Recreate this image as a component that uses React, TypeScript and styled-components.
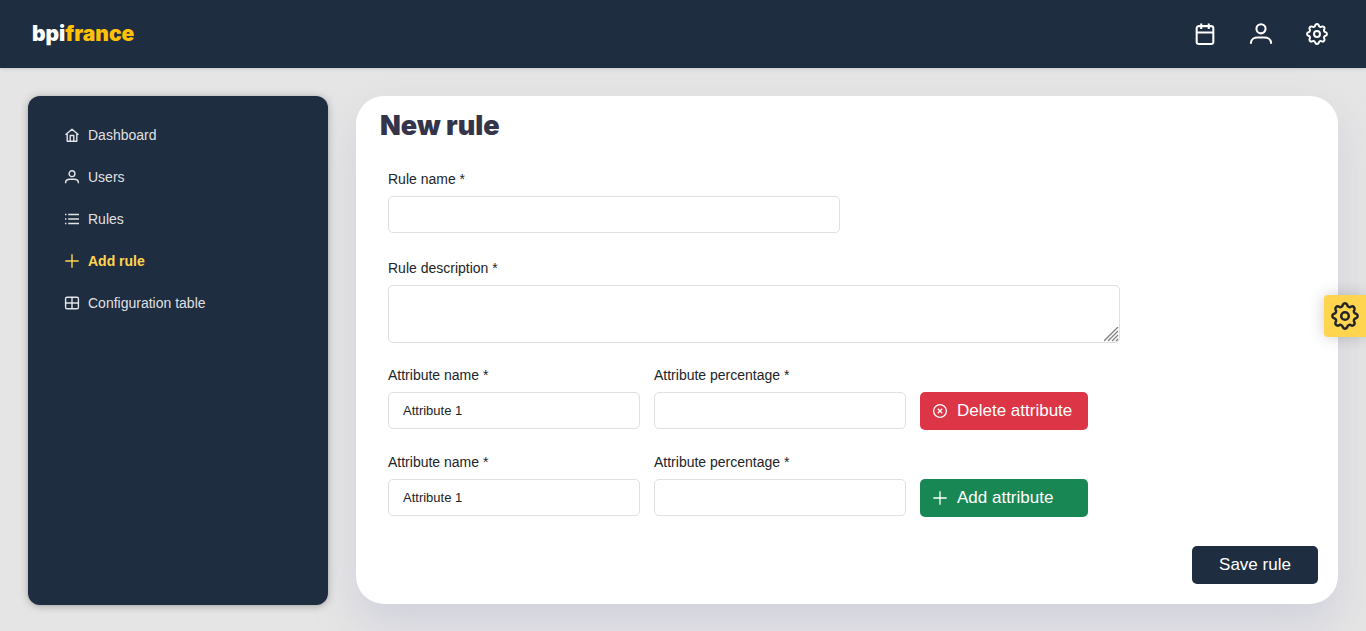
import React from "react";
import styled, { createGlobalStyle } from "styled-components";

const GlobalStyle = createGlobalStyle`
  *, *::before, *::after { box-sizing: border-box; }
  body {
    margin: 0;
    background: #e5e5e5;
    color: #212529;
    font-family: "Liberation Sans", Arial, sans-serif;
    font-size: 14px;
    line-height: 21px;
  }
`;

const navy = "#1f2d40";

const Page = styled.div`
  min-height: 100vh;
  overflow: hidden;
`;

const TopBar = styled.header`
  position: relative;
  z-index: 1;
  display: flex;
  align-items: center;
  justify-content: space-between;
  height: 68px;
  padding: 0 32px;
  background: ${navy};
  box-shadow: 0 3px 5px rgba(0, 0, 0, 0.02), 0 0 2px rgba(0, 0, 0, 0.05), 0 1px 4px rgba(0, 0, 0, 0.08);
`;

const Logo = styled.a`
  color: #fff;
  font-family: Inter, sans-serif;
  font-size: 21px;
  font-weight: 900;
  line-height: 24px;
  text-decoration: none;
`;

const LogoAccent = styled.span`
  color: #ffc107;
`;

const TopActions = styled.div`
  display: flex;
  gap: 14px;
  margin-right: -4px;
`;

const IconButton = styled.button`
  display: grid;
  place-items: center;
  width: 42px;
  height: 42px;
  padding: 0;
  border: 0;
  border-radius: 50%;
  background: transparent;
  color: #fff;
  cursor: pointer;
`;

const Body = styled.div`
  display: flex;
  align-items: flex-start;
  gap: 28px;
  padding: 28px;
`;

const Sidebar = styled.nav`
  position: relative;
  z-index: 1;
  flex: 0 0 300px;
  height: calc(100vh - 122px);
  min-height: 300px;
  padding: 18px 28px;
  border-radius: 12px;
  background: ${navy};
  box-shadow: 0 3px 5px rgba(0, 0, 0, 0.02), 0 0 2px rgba(0, 0, 0, 0.1), 0 1px 8px rgba(0, 0, 0, 0.25);
`;

const Menu = styled.ul`
  margin: 0;
  padding: 0;
  list-style: none;
`;

const MenuLink = styled.a<{ $active?: boolean }>`
  display: flex;
  align-items: center;
  gap: 9px;
  height: 42px;
  padding: 0 9px;
  color: ${(p) => (p.$active ? "#ffd54f" : "rgba(255, 255, 255, 0.87)")};
  font-weight: ${(p) => (p.$active ? 700 : 400)};
  text-decoration: none;
`;

const Card = styled.main`
  flex: 1;
  min-width: 0;
  padding: 16px 20px 20px 24px;
  border-radius: 28px;
  background: #fff;
  box-shadow: 0 20px 40px rgba(173, 173, 209, 0.35);
`;

const Title = styled.h1`
  margin: 0 0 29px;
  color: #34344a;
  font-family: Inter, sans-serif;
  font-size: 27px;
  font-weight: 900;
  line-height: 28px;
`;

const Fields = styled.div`
  display: flex;
  flex-direction: column;
  gap: 22px;
  padding-left: 8px;
`;

const Field = styled.div<{ $max?: number }>`
  display: flex;
  flex-direction: column;
  gap: 6px;
  width: 100%;
  max-width: ${(p) => (p.$max ? `${p.$max}px` : "none")};
`;

const NameField = styled(Field)`
  margin-bottom: 3px;
`;

const Input = styled.input`
  width: 100%;
  height: 37px;
  padding: 0 14px;
  border: 1px solid #e1dee0;
  border-radius: 5px;
  background: #fff;
  color: #212529;
  font-family: inherit;
  font-size: 13px;
`;

const AreaWrap = styled.div`
  position: relative;
  display: flex;
`;

const TextArea = styled.textarea`
  width: 100%;
  height: 58px;
  padding: 8px 14px;
  border: 1px solid #e1dee0;
  border-radius: 5px;
  background: #fff;
  color: #212529;
  font-family: inherit;
  font-size: 13px;
  resize: none;
`;

const Grip = styled.svg`
  position: absolute;
  right: 1px;
  bottom: 1px;
  pointer-events: none;
`;

const AttributeRow = styled.div`
  display: grid;
  grid-template-columns: minmax(0, 252px) minmax(0, 252px) 168px;
  gap: 14px;
`;

const Button = styled.button<{ $tone: string }>`
  display: flex;
  align-items: center;
  gap: 10px;
  height: 38px;
  padding: 0 13px;
  border: 0;
  border-radius: 5px;
  background: ${(p) => p.$tone};
  color: #fff;
  font-family: inherit;
  font-size: 17px;
  white-space: nowrap;
  cursor: pointer;
`;

const RowButton = styled(Button)`
  margin-top: 27px;
`;

const Footer = styled.div`
  display: flex;
  justify-content: flex-end;
  margin-top: 29px;
`;

const SaveButton = styled(Button)`
  justify-content: center;
  width: 126px;
`;

const ConfigButton = styled.button`
  position: fixed;
  top: 0;
  right: 0;
  bottom: 0;
  display: grid;
  place-items: center;
  width: 42px;
  height: 42px;
  margin: auto 0;
  padding: 0;
  border: 0;
  border-radius: 4px 0 0 4px;
  background: #ffd54f;
  color: #212529;
  box-shadow: 0 0 16px rgba(0, 0, 0, 0.2);
  cursor: pointer;
`;

type IconName = "home" | "user" | "list" | "plus" | "table" | "calendar" | "cancel";

const shapes: Record<IconName, React.ReactNode> = {
  home: <path d="M.5 6.700 7 1.200l6.500 5.500M2.200 5.700v7.500h9.600V5.700M5.200 13.200V7.500h3.600v5.700" />,
  user: (
    <>
      <circle cx="7" cy="3.700" r="2.900" />
      <path d="M.6 13.200v-.6C.6 10.300 2.800 9.200 5 9.200h4c2.200 0 4.400 1.100 4.400 3.400v.6" />
    </>
  ),
  list: <path d="M3.200 2.500H14M3.200 7H14M3.200 11.500H14M0 2.500h1.400M0 7h1.400M0 11.500h1.400" />,
  plus: <path d="M7 .3v13.400M.3 7h13.400" />,
  table: (
    <>
      <rect x=".6" y="1.200" width="12.800" height="11.600" rx="1.400" />
      <path d="M7 1.200v11.600M.6 7h12.800" />
    </>
  ),
  calendar: (
    <>
      <rect x="1.700" y="2" width="10.600" height="11.300" rx="1.400" />
      <path d="M1.700 6.100h10.600M4.600.3v3.500M9.400.3v3.500" />
    </>
  ),
  cancel: (
    <>
      <circle cx="7" cy="7" r="6.400" />
      <path d="m4.800 4.800 4.400 4.400M9.200 4.800 4.800 9.200" />
    </>
  ),
};

function Icon({ name, size = 14, weight = 1.3 }: { name: IconName; size?: number; weight?: number }) {
  return (
    <svg
      width={size}
      height={size}
      viewBox="0 0 14 14"
      fill="none"
      stroke="currentColor"
      strokeWidth={weight}
      strokeLinejoin="round"
      overflow="visible"
      aria-hidden="true"
    >
      {shapes[name]}
    </svg>
  );
}

// Outline of a gear with eight rounded teeth, alternating convex and concave arcs.
function gearOutline() {
  const point = (deg: number) => {
    const a = (deg * Math.PI) / 180;
    return `${(14 + 11.2 * Math.cos(a)).toFixed(2)} ${(14 + 11.2 * Math.sin(a)).toFixed(2)}`;
  };
  let d = `M${point(-12)}`;
  for (let tooth = 0; tooth < 360; tooth += 45) {
    d += `A2.450 2.450 0 0 1 ${point(tooth + 12)}A2.300 2.300 0 0 0 ${point(tooth + 33)}`;
  }
  return `${d}Z`;
}

const gearPath = gearOutline();

function Gear({ size }: { size: number }) {
  return (
    <svg
      width={size}
      height={size}
      viewBox="0 0 28 28"
      fill="none"
      stroke="currentColor"
      strokeWidth="2.500"
      strokeLinejoin="round"
      overflow="visible"
      aria-hidden="true"
    >
      <path d={gearPath} />
      <circle cx="14" cy="14" r="3.800" />
    </svg>
  );
}

const menu: { label: string; icon: IconName; active?: boolean }[] = [
  { label: "Dashboard", icon: "home" },
  { label: "Users", icon: "user" },
  { label: "Rules", icon: "list" },
  { label: "Add rule", icon: "plus", active: true },
  { label: "Configuration table", icon: "table" },
];

const attributes: { id: string; action: string; icon: IconName; tone: string }[] = [
  { id: "first", action: "Delete attribute", icon: "cancel", tone: "#dc3545" },
  { id: "second", action: "Add attribute", icon: "plus", tone: "#198754" },
];

export default function App() {
  return (
    <Page>
      <GlobalStyle />
      <TopBar>
        <Logo href="#">
          bpi<LogoAccent>france</LogoAccent>
        </Logo>
        <TopActions>
          <IconButton type="button" aria-label="Calendar">
            <Icon name="calendar" size={22} />
          </IconButton>
          <IconButton type="button" aria-label="Profile">
            <Icon name="user" size={22} />
          </IconButton>
          <IconButton type="button" aria-label="Settings">
            <Gear size={22} />
          </IconButton>
        </TopActions>
      </TopBar>
      <Body>
        <Sidebar>
          <Menu>
            {menu.map((item) => (
              <li key={item.label}>
                <MenuLink href="#" $active={item.active} aria-current={item.active ? "page" : undefined}>
                  <Icon name={item.icon} weight={1.4} />
                  {item.label}
                </MenuLink>
              </li>
            ))}
          </Menu>
        </Sidebar>
        <Card>
          <Title>New rule</Title>
          <form onSubmit={(e) => e.preventDefault()}>
            <Fields>
              <NameField $max={452}>
                <label htmlFor="rule-name">Rule name *</label>
                <Input id="rule-name" type="text" />
              </NameField>
              <Field $max={732}>
                <label htmlFor="rule-description">Rule description *</label>
                <AreaWrap>
                  <TextArea id="rule-description" />
                  <Grip width="15" height="15" viewBox="0 0 15 15" stroke="#808080" strokeWidth="1.300" aria-hidden="true">
                    <path d="M0 14 14 0M4 14 14 4M8 14l6-6M12 14l2-2" />
                  </Grip>
                </AreaWrap>
              </Field>
              {attributes.map((row) => (
                <AttributeRow key={row.id}>
                  <Field>
                    <label htmlFor={`${row.id}-name`}>Attribute name *</label>
                    <Input id={`${row.id}-name`} type="text" defaultValue="Attribute 1" />
                  </Field>
                  <Field>
                    <label htmlFor={`${row.id}-percentage`}>Attribute percentage *</label>
                    <Input id={`${row.id}-percentage`} type="text" />
                  </Field>
                  <RowButton type="button" $tone={row.tone}>
                    <Icon name={row.icon} />
                    {row.action}
                  </RowButton>
                </AttributeRow>
              ))}
            </Fields>
            <Footer>
              <SaveButton type="submit" $tone={navy}>
                Save rule
              </SaveButton>
            </Footer>
          </form>
        </Card>
      </Body>
      <ConfigButton type="button" aria-label="Open theme settings">
        <Gear size={28} />
      </ConfigButton>
    </Page>
  );
}
